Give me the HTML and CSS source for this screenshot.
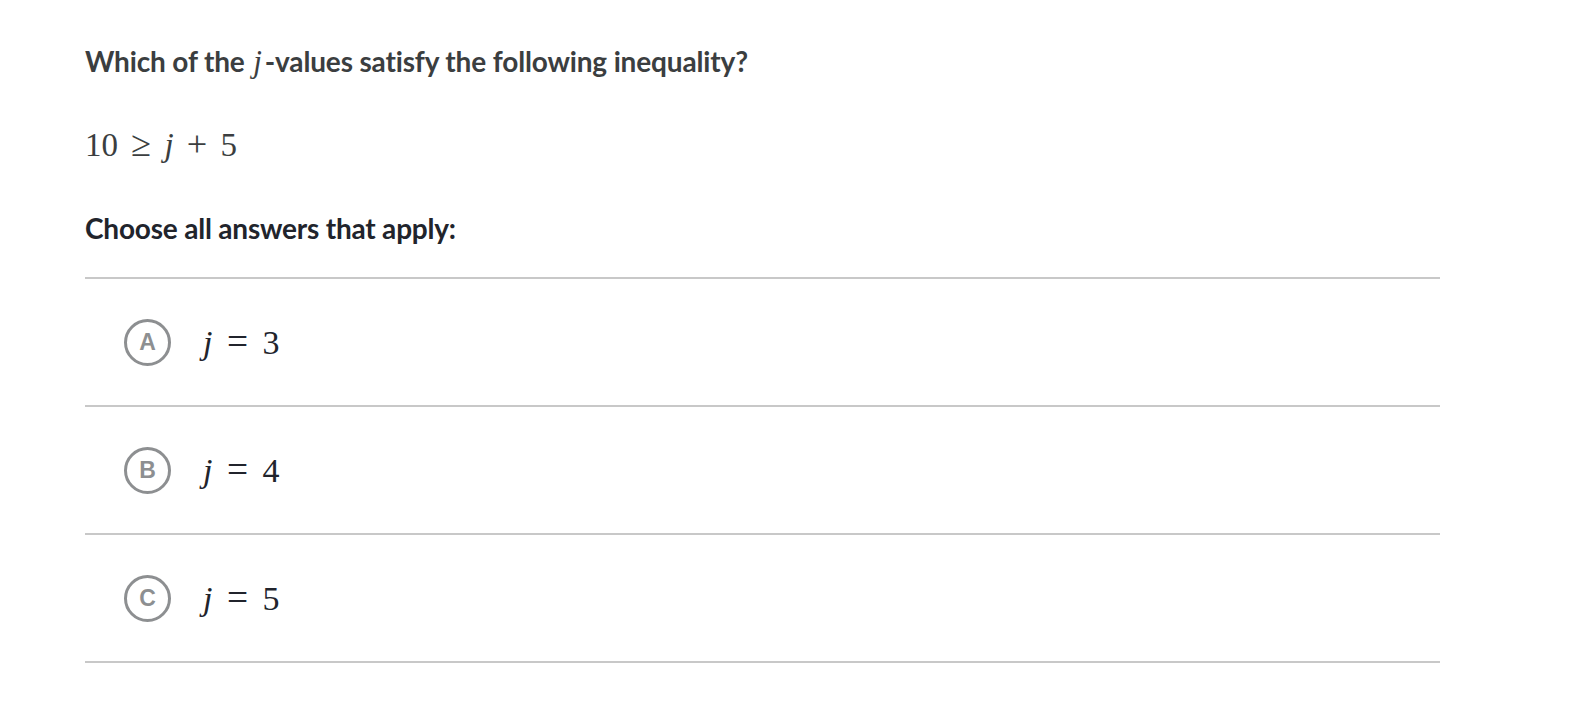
FILE: index.html
```html
<!DOCTYPE html>
<html>
<head>
<meta charset="utf-8">
<link rel="stylesheet" href="styles.css">
</head>
<body>
<div class="page">
  <h1 class="title">Which of the <span class="mi">j</span>-values satisfy the following inequality?</h1>
  <div class="math eq">10 <span class="op">≥</span> <span class="mi">j</span> <span class="op">+</span> 5</div>
  <h2 class="prompt">Choose all answers that apply:</h2>
  <ul class="choices">
    <li class="choice"><span class="badge">A</span><span class="math ans"><span class="mi">j</span> <span class="op">=</span> 3</span></li>
    <li class="choice"><span class="badge">B</span><span class="math ans"><span class="mi">j</span> <span class="op">=</span> 4</span></li>
    <li class="choice"><span class="badge">C</span><span class="math ans"><span class="mi">j</span> <span class="op">=</span> 5</span></li>
  </ul>
</div>
</body>
</html>
```

FILE: styles.css
```css
* { box-sizing: border-box; }
body { margin: 0; background: #fff; }
.page {
  padding: 43px 0 0 85px;
  width: 1440px;
  font-family: Lato, "Open Sans", sans-serif;
}
.title {
  margin: 0;
  font-size: 28px;
  line-height: 36px;
  font-weight: 700;
  color: #3b3e40;
  letter-spacing: -0.15px;
}
.title .mi {
  font-family: "Liberation Serif", serif;
  font-style: italic;
  font-weight: 400;
  font-size: 31px;
  margin: 0 3px 0 2px;
}
.math {
  font-family: "Liberation Serif", "DejaVu Serif", serif;
  color: #21242c;
}
.math .mi { font-style: italic; }
.math .op { margin: 0 5px; font-size: 1.1em; }
.eq {
  margin-top: 44px;
  font-size: 33px;
  line-height: 40px;
  color: #3b3e40;
}
.prompt {
  margin: 45px 0 0;
  font-size: 28px;
  line-height: 36px;
  font-weight: 700;
  color: #21242c;
  letter-spacing: -0.2px;
}
.choices {
  list-style: none;
  margin: 31px 0 0;
  padding: 0;
  border-top: 2px solid #c8c8c8;
}
.choice {
  height: 128px;
  border-bottom: 2px solid #c8c8c8;
  display: flex;
  align-items: center;
  padding-left: 39px;
}
.badge {
  width: 47px;
  height: 47px;
  border: 3px solid #8d8f91;
  border-radius: 50%;
  display: flex;
  align-items: center;
  justify-content: center;
  font-family: "Liberation Sans", Arial, sans-serif;
  font-weight: 700;
  font-size: 23px;
  color: #8d8f91;
  flex: none;
}
.ans {
  margin-left: 32px;
  font-size: 34px;
  line-height: 40px;
}
.ans .op { margin: 0 6px; }
```
